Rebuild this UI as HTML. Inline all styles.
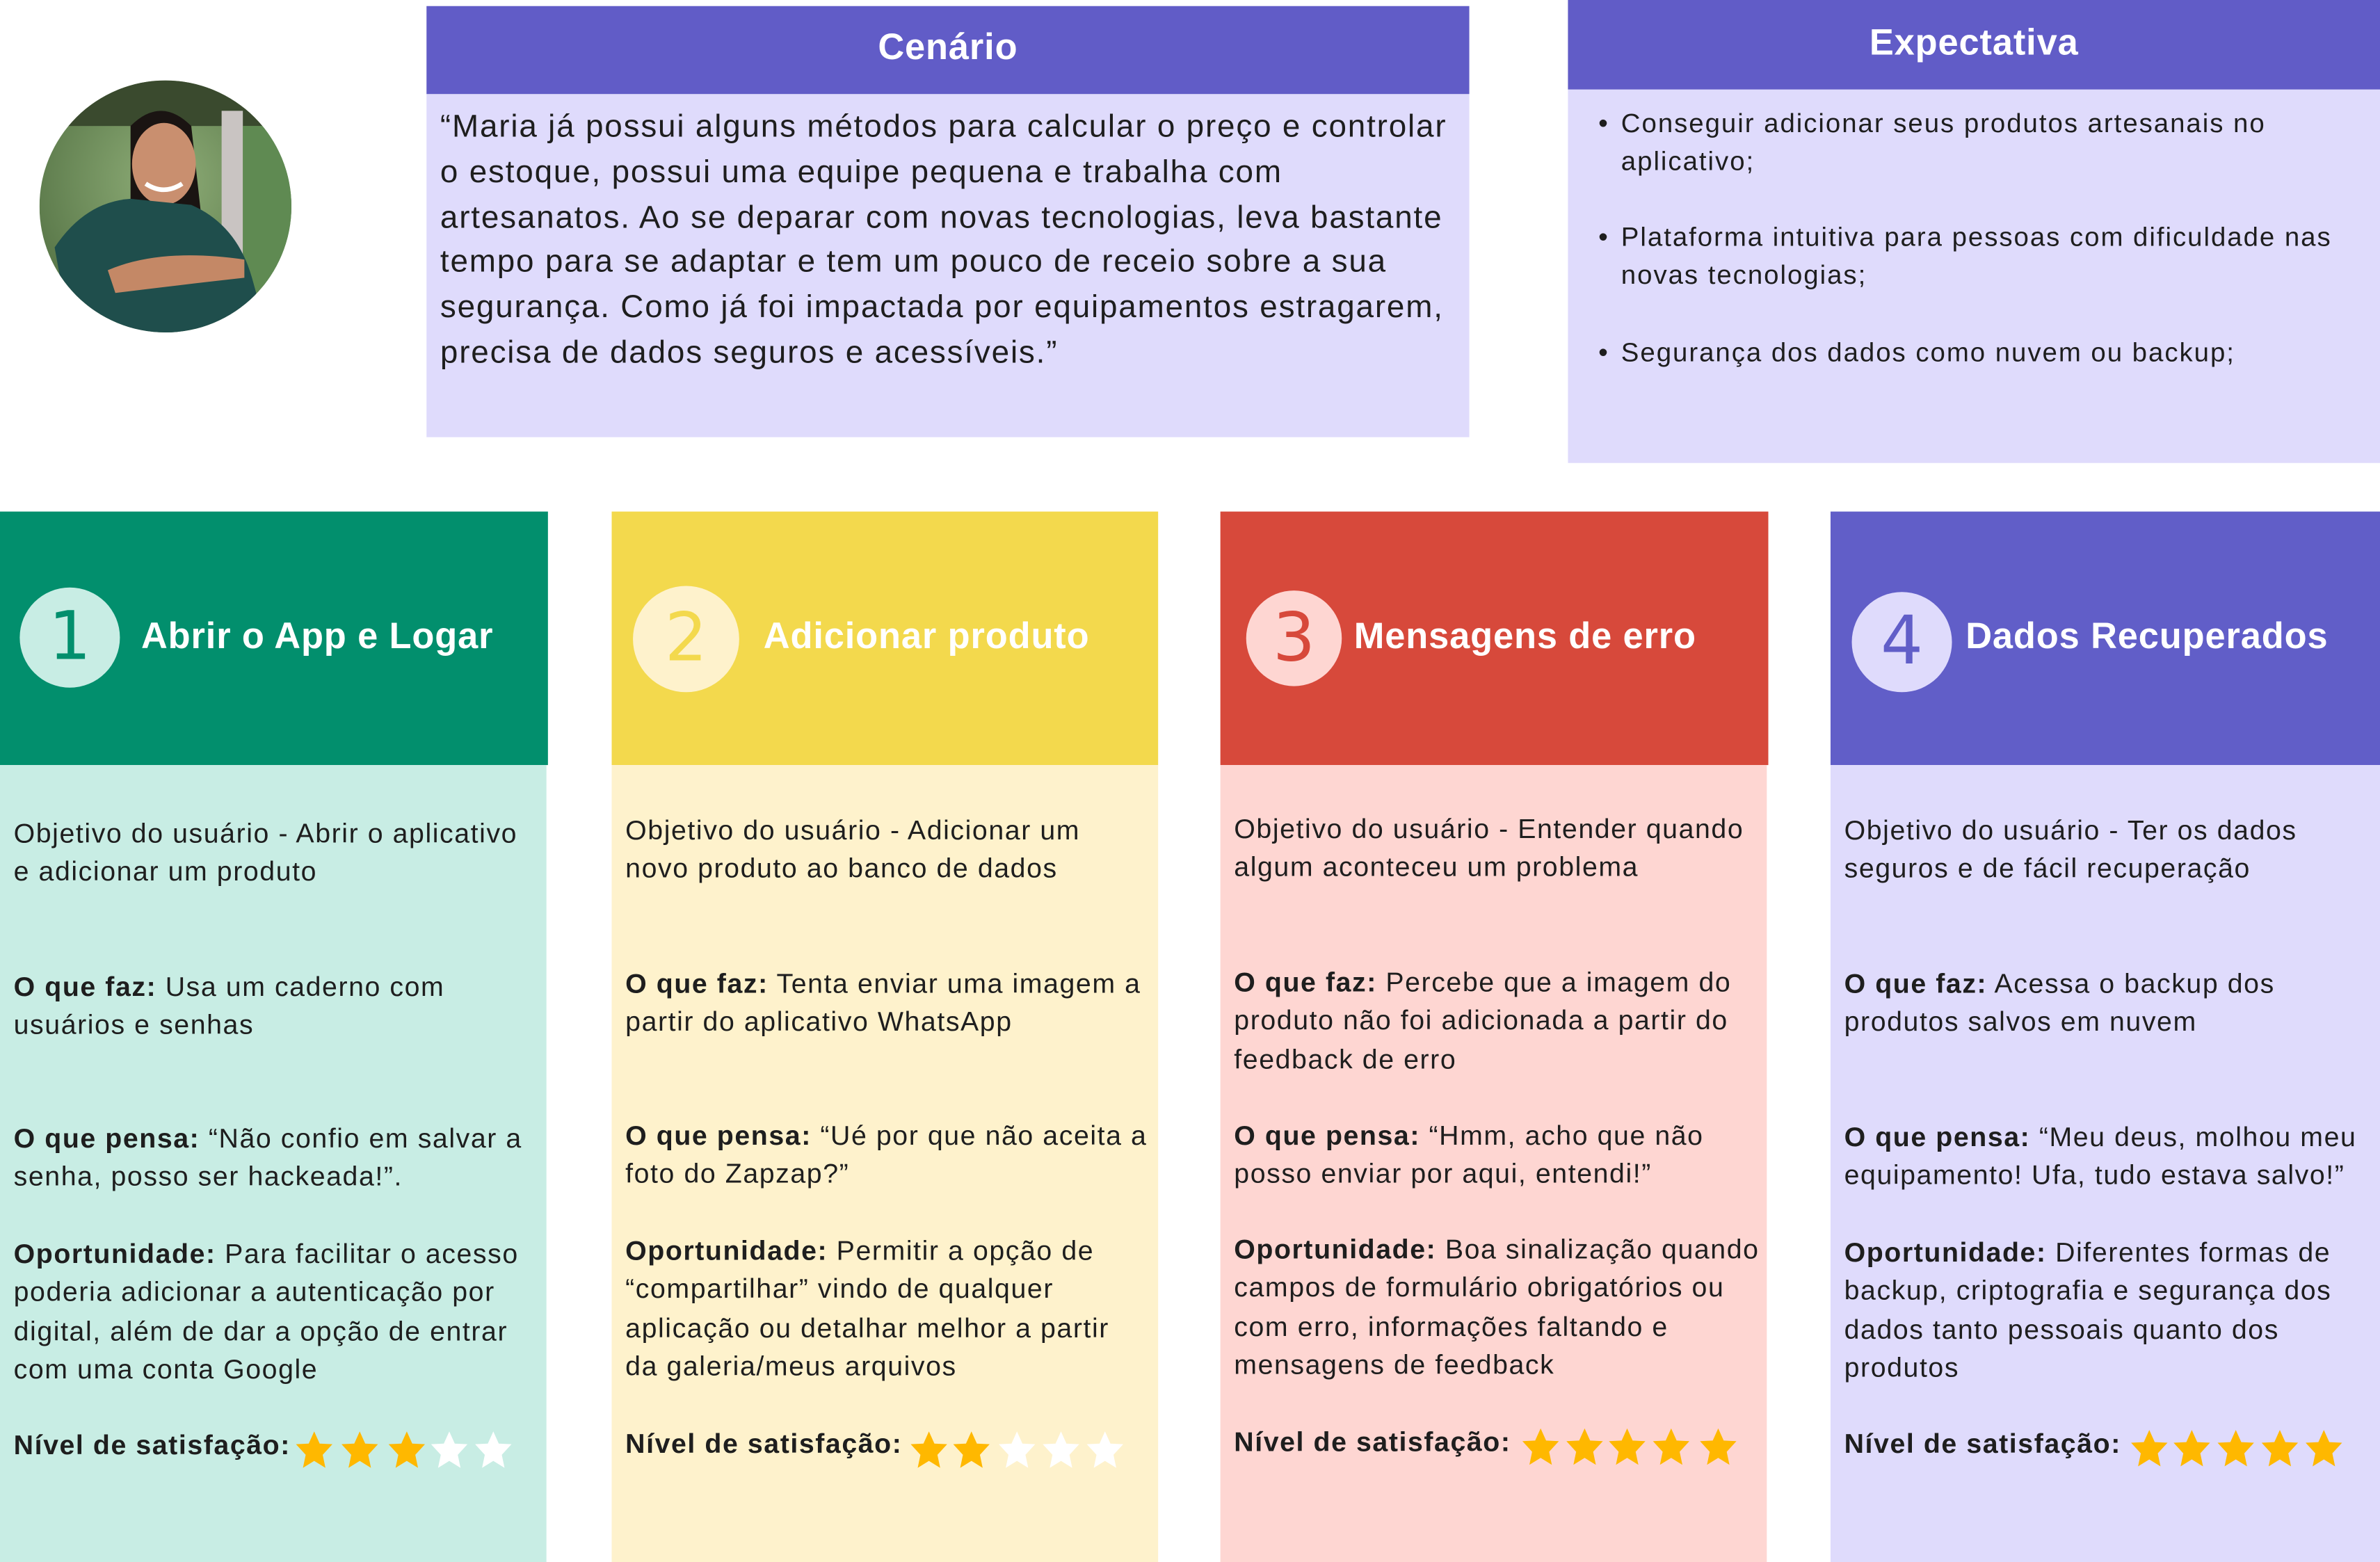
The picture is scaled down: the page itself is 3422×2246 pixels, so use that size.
<!DOCTYPE html>
<html><head><meta charset="utf-8"><style>
html,body{margin:0;padding:0;background:#fff;}
body{width:3422px;height:2246px;overflow:hidden;position:relative;}
#w{position:absolute;left:0;top:0;width:1568px;height:1029px;transform:scale(2.1824,2.1827);transform-origin:0 0;font-family:"Liberation Sans",sans-serif;color:#1e1e1e;}
.a{position:absolute;}
.t{position:absolute;font-size:18px;line-height:25.3px;white-space:nowrap;letter-spacing:0.72px;}
.hd{position:absolute;color:#fff;font-weight:bold;font-size:24px;white-space:nowrap;letter-spacing:0.4px;}
.c{position:absolute;border-radius:50%;font-size:44px;text-align:center;font-family:"DejaVu Sans",sans-serif;}
b{font-weight:bold;}
.st{position:absolute;}
</style></head><body><div id="w">

<svg class="a" style="left:26px;top:53px" width="166" height="166" viewBox="0 0 166 166">
<defs><clipPath id="cp"><circle cx="83" cy="83" r="83"/></clipPath>
<radialGradient id="bg" cx="0.5" cy="0.4" r="0.7"><stop offset="0" stop-color="#8fae78"/><stop offset="1" stop-color="#4d6b3e"/></radialGradient></defs>
<g clip-path="url(#cp)">
<rect width="166" height="166" fill="url(#bg)"/>
<rect x="0" y="0" width="166" height="30" fill="#3a4a2e"/>
<rect x="120" y="20" width="14" height="146" fill="#c9c4c2"/>
<rect x="134" y="30" width="32" height="110" fill="#5f8a52"/>
<path d="M60 30 Q80 10 100 30 L110 120 L60 130 Z" fill="#1a1412"/>
<ellipse cx="82" cy="55" rx="21" ry="27" fill="#c98f6f"/>
<path d="M70 68 Q82 76 94 68" stroke="#fff" stroke-width="3" fill="none"/>
<path d="M10 110 Q30 80 60 78 L100 82 Q130 95 140 130 L150 166 L20 166 Z" fill="#1f4e4c"/>
<path d="M45 125 Q80 110 135 118 L135 130 Q90 135 50 140 Z" fill="#c48866"/>
</g></svg>

<!-- Cenario -->
<div class="a" style="left:281px;top:4px;width:687px;height:58px;background:#615cc7"></div>
<div class="hd" style="left:281px;top:18px;width:687px;text-align:center">Cenário</div>
<div class="a" style="left:281px;top:62px;width:687px;height:226px;background:#dfdbfc"></div>
<div class="t" style="left:290px;top:69px;font-size:21px;line-height:29.8px;letter-spacing:0.83px">“Maria já possui alguns métodos para calcular o preço e controlar<br>o estoque, possui uma equipe pequena e trabalha com<br>artesanatos. Ao se deparar com novas tecnologias, leva bastante<br>tempo para se adaptar e tem um pouco de receio sobre a sua<br>segurança. Como já foi impactada por equipamentos estragarem,<br>precisa de dados seguros e acessíveis.”</div>

<!-- Expectativa -->
<div class="a" style="left:1033px;top:0px;width:535px;height:59px;background:#615cc7"></div>
<div class="hd" style="left:1033px;top:15px;width:535px;text-align:center">Expectativa</div>
<div class="a" style="left:1033px;top:59px;width:535px;height:246px;background:#dfdbfc"></div>
<div class="t" style="left:1053px;top:69px">•</div><div class="t" style="left:1068px;top:69px;font-size:17.6px;letter-spacing:0.9px">Conseguir adicionar seus produtos artesanais no<br>aplicativo;</div>
<div class="t" style="left:1053px;top:144px">•</div><div class="t" style="left:1068px;top:144px;font-size:17.6px;letter-spacing:0.9px">Plataforma intuitiva para pessoas com dificuldade nas<br>novas tecnologias;</div>
<div class="t" style="left:1053px;top:220px">•</div><div class="t" style="left:1068px;top:220px;font-size:17.6px;letter-spacing:0.9px">Segurança dos dados como nuvem ou backup;</div>

<!-- Card 1 -->
<div class="a" style="left:0;top:337px;width:361px;height:167px;background:#028f6d"></div>
<div class="a" style="left:0;top:504px;width:360px;height:525px;background:#c8ede4"></div>
<div class="c" style="left:13px;top:387px;width:66px;height:66px;background:#c8ede4;color:#028f6d;line-height:66px">1</div>
<div class="hd" style="left:93px;top:406px">Abrir o App e Logar</div>
<div class="t" style="left:9px;top:537px">Objetivo do usuário - Abrir o aplicativo<br>e adicionar um produto</div>
<div class="t" style="left:9px;top:638px"><b>O que faz:</b> Usa um caderno com<br>usuários e senhas</div>
<div class="t" style="left:9px;top:738px"><b>O que pensa:</b> “Não confio em salvar a<br>senha, posso ser hackeada!”.</div>
<div class="t" style="left:9px;top:814px"><b>Oportunidade:</b> Para facilitar o acesso<br>poderia adicionar a autenticação por<br>digital, além de dar a opção de entrar<br>com uma conta Google</div>
<div class="t" style="left:9px;top:940px"><b>Nível de satisfação:</b></div>

<!-- Card 2 -->
<div class="a" style="left:403px;top:337px;width:360px;height:167px;background:#f3d94d"></div>
<div class="a" style="left:403px;top:504px;width:360px;height:525px;background:#fef2cc"></div>
<div class="c" style="left:417px;top:386px;width:70px;height:70px;background:#fef2cc;color:#f3d94d;line-height:70px">2</div>
<div class="hd" style="left:503px;top:406px">Adicionar produto</div>
<div class="t" style="left:412px;top:535px">Objetivo do usuário - Adicionar um<br>novo produto ao banco de dados</div>
<div class="t" style="left:412px;top:636px"><b>O que faz:</b> Tenta enviar uma imagem a<br>partir do aplicativo WhatsApp</div>
<div class="t" style="left:412px;top:736px"><b>O que pensa:</b> “Ué por que não aceita a<br>foto do Zapzap?”</div>
<div class="t" style="left:412px;top:812px"><b>Oportunidade:</b> Permitir a opção de<br>“compartilhar” vindo de qualquer<br>aplicação ou detalhar melhor a partir<br>da galeria/meus arquivos</div>
<div class="t" style="left:412px;top:939px"><b>Nível de satisfação:</b></div>

<!-- Card 3 -->
<div class="a" style="left:804px;top:337px;width:361px;height:167px;background:#d7493b"></div>
<div class="a" style="left:804px;top:504px;width:360px;height:525px;background:#fed6d2"></div>
<div class="c" style="left:821px;top:389px;width:63px;height:63px;background:#fed6d2;color:#d7493b;line-height:63px">3</div>
<div class="hd" style="left:892px;top:406px">Mensagens de erro</div>
<div class="t" style="left:813px;top:534px">Objetivo do usuário - Entender quando<br>algum aconteceu um problema</div>
<div class="t" style="left:813px;top:635px"><b>O que faz:</b> Percebe que a imagem do<br>produto não foi adicionada a partir do<br>feedback de erro</div>
<div class="t" style="left:813px;top:736px"><b>O que pensa:</b> “Hmm, acho que não<br>posso enviar por aqui, entendi!”</div>
<div class="t" style="left:813px;top:811px"><b>Oportunidade:</b> Boa sinalização quando<br>campos de formulário obrigatórios ou<br>com erro, informações faltando e<br>mensagens de feedback</div>
<div class="t" style="left:813px;top:938px"><b>Nível de satisfação:</b></div>

<!-- Card 4 -->
<div class="a" style="left:1206px;top:337px;width:362px;height:167px;background:#615ec8"></div>
<div class="a" style="left:1206px;top:504px;width:362px;height:525px;background:#dfdbfc"></div>
<div class="c" style="left:1220px;top:390px;width:66px;height:66px;background:#dfdbfc;color:#615ec8;line-height:66px">4</div>
<div class="hd" style="left:1295px;top:406px">Dados Recuperados</div>
<div class="t" style="left:1215px;top:535px">Objetivo do usuário - Ter os dados<br>seguros e de fácil recuperação</div>
<div class="t" style="left:1215px;top:636px"><b>O que faz:</b> Acessa o backup dos<br>produtos salvos em nuvem</div>
<div class="t" style="left:1215px;top:737px"><b>O que pensa:</b> “Meu deus, molhou meu<br>equipamento! Ufa, tudo estava salvo!”</div>
<div class="t" style="left:1215px;top:813px"><b>Oportunidade:</b> Diferentes formas de<br>backup, criptografia e segurança dos<br>dados tanto pessoais quanto dos<br>produtos</div>
<div class="t" style="left:1215px;top:939px"><b>Nível de satisfação:</b></div>

<svg class="a" style="left:0;top:0" width="1568" height="1029">
<defs><path id="s" d="M0,-12 L3.6,-4 L12,-3.6 L5.6,3.4 L7.4,12 L0,7.4 L-7.4,12 L-5.6,3.4 L-12,-3.6 L-3.6,-4 Z"/></defs>
<g fill="#ffb800">
<use href="#s" x="207" y="955"/><use href="#s" x="237" y="955"/><use href="#s" x="268" y="955"/>
<use href="#s" x="612" y="955"/><use href="#s" x="640" y="955"/>
<use href="#s" x="1015" y="953"/><use href="#s" x="1044" y="953"/><use href="#s" x="1072" y="953"/><use href="#s" x="1101" y="953"/><use href="#s" x="1132" y="953"/>
<use href="#s" x="1416" y="954"/><use href="#s" x="1444" y="954"/><use href="#s" x="1473" y="954"/><use href="#s" x="1502" y="954"/><use href="#s" x="1531" y="954"/>
</g>
<g fill="#fff">
<use href="#s" x="296" y="955"/><use href="#s" x="325" y="955"/>
<use href="#s" x="670" y="955"/><use href="#s" x="699" y="955"/><use href="#s" x="728" y="955"/>
</g>
</svg>
</div></body></html>
